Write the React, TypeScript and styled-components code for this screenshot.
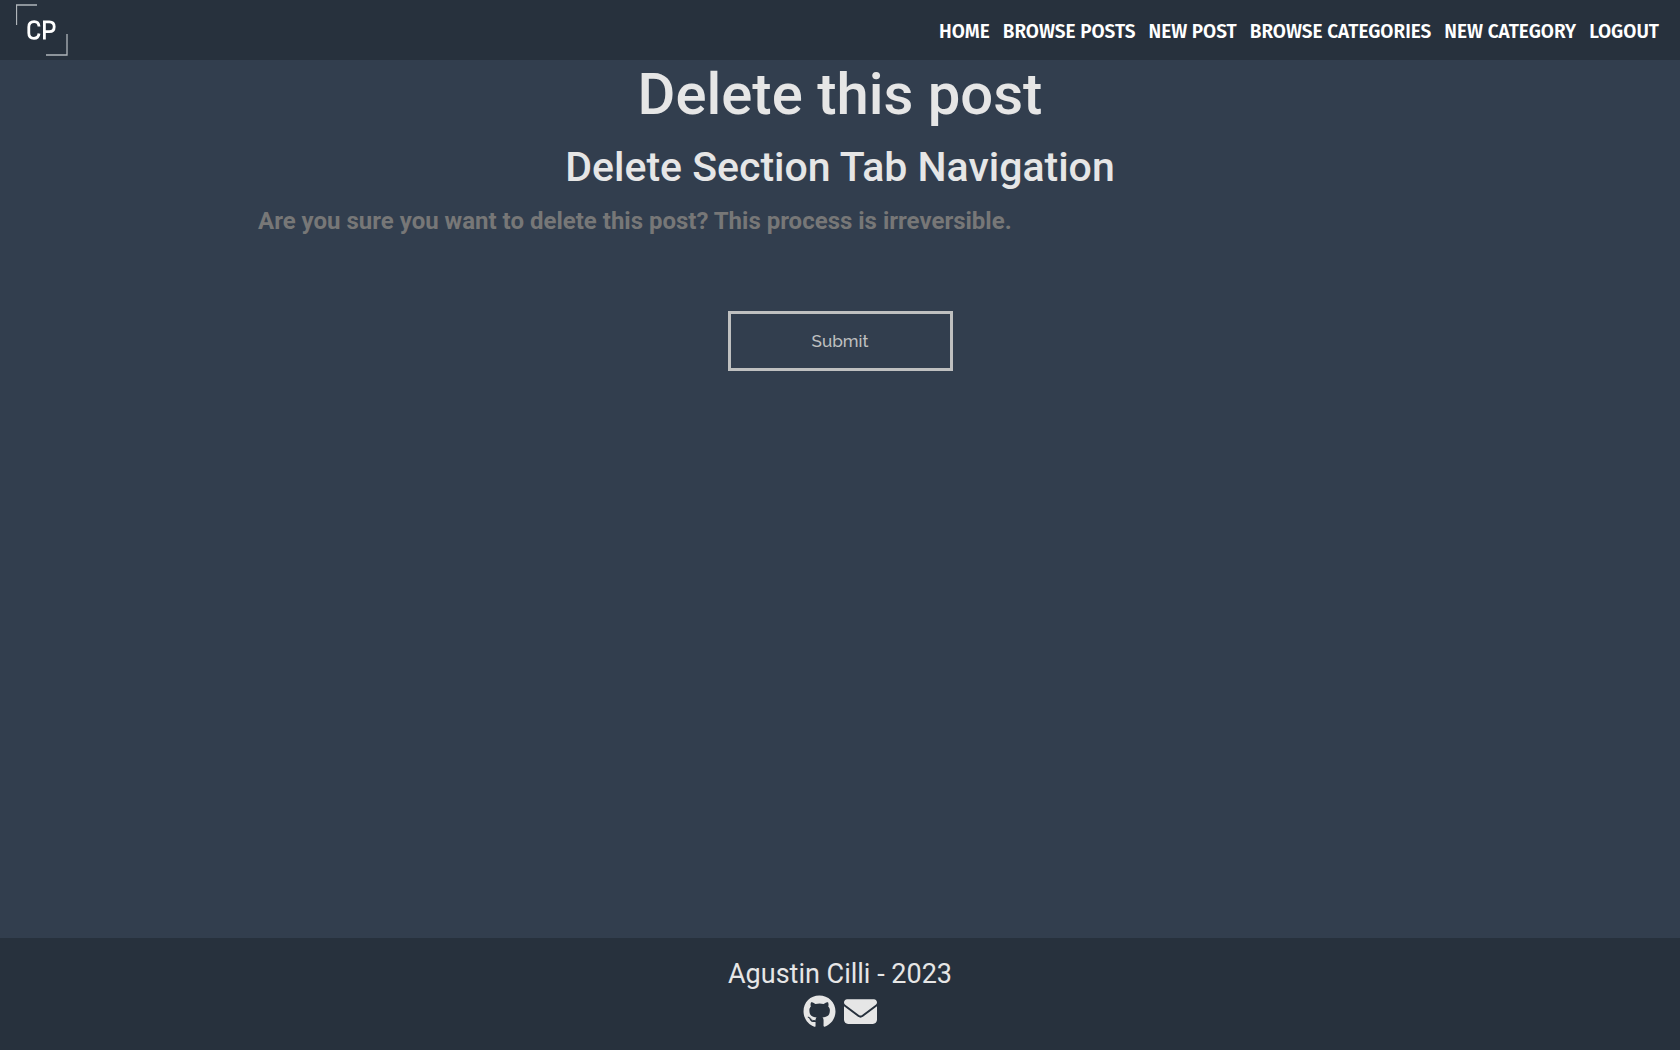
import React from "react";
import styled, { createGlobalStyle } from "styled-components";
import { FaEnvelope, FaGithub } from "react-icons/fa6";

const GlobalStyle = createGlobalStyle`
  * { box-sizing: border-box; }
  body {
    margin: 0;
    background: #323e4e;
    color: #e6e6e6;
    font-family: Roboto, sans-serif;
  }
`;

const Page = styled.div`
  display: flex;
  flex-direction: column;
  min-height: 100vh;
`;

const Header = styled.header`
  display: flex;
  align-items: center;
  justify-content: space-between;
  height: 60px;
  padding: 0 21px 0 16px;
  background: #27313d;
`;

const HomeLink = styled.a`
  display: flex;
  color: #ffffff;
`;

const Menu = styled.ul`
  display: flex;
  gap: 13px;
  margin: 0;
  padding: 4px 0 0;
  list-style: none;
`;

const MenuLink = styled.a`
  color: #ffffff;
  font-family: "Fira Sans", Roboto, sans-serif;
  font-size: 19px;
  font-weight: 600;
  line-height: 24px;
  text-decoration: none;
  text-transform: uppercase;
`;

const Main = styled.main`
  flex: 1;
`;

const Title = styled.h1`
  margin: 0;
  font-size: 58px;
  font-weight: 500;
  line-height: 68px;
  text-align: center;
`;

const Subtitle = styled.h2`
  margin: 15px 0 0;
  font-size: 41px;
  font-weight: 500;
  line-height: 48px;
  text-align: center;
`;

const Form = styled.form`
  display: flex;
  flex-direction: column;
  width: 70%;
  margin: 16px auto 0;
  padding: 0 6px;
`;

const Warning = styled.h3`
  margin: 0;
  color: #777777;
  font-size: 24px;
  font-weight: 700;
  line-height: 28px;
`;

const SubmitButton = styled.button`
  align-self: center;
  width: 225px;
  height: 60px;
  margin-top: 76px;
  padding: 0;
  border: 3px solid #bfc0c0;
  background: transparent;
  color: #bfc0c0;
  font-family: Raleway, Lato, sans-serif;
  font-size: 17px;
  font-weight: 500;
  cursor: pointer;
`;

const Footer = styled.footer`
  display: flex;
  flex-direction: column;
  align-items: center;
  height: 112px;
  padding-top: 20px;
  background: #27313d;
`;

const Author = styled.p`
  margin: 0;
  font-size: 27px;
  line-height: 32px;
`;

const Contacts = styled.div`
  display: flex;
  gap: 8px;
  margin-top: 5px;
`;

const ContactLink = styled.a`
  display: flex;
  color: inherit;
  font-size: 33px;
`;

const pages = ["Home", "Browse posts", "New post", "Browse categories", "New category", "Logout"];

function Logo() {
  return (
    <svg width="52" height="52" viewBox="0 0 52 52" fill="none" stroke="currentColor" aria-hidden="true">
      <path d="M.5 21V1H21M51 30V51H30" stroke="#b0b5ba" strokeWidth="1.300" />
      <path d="M23 22.500C22.800 19 21.300 17.700 18.200 17.700C14.500 17.700 12.800 19.800 12.800 23V29C12.800 32.300 14.500 34.300 18 34.300C21.200 34.300 22.700 32.600 23 29.500" strokeWidth="2.800" />
      <path d="M28.400 35.600V17.800H33.300C36.500 17.800 38.200 19.800 38.200 22.700S36.500 27.700 33.300 27.700H28.400" strokeWidth="2.800" />
    </svg>
  );
}

export default function App() {
  return (
    <>
      <GlobalStyle />
      <Page>
        <Header>
          <HomeLink href="#home" aria-label="CP"><Logo /></HomeLink>
          <nav>
            <Menu>
              {pages.map((page) => (
                <li key={page}>
                  <MenuLink href={`#${page.toLowerCase().replace(" ", "-")}`}>{page}</MenuLink>
                </li>
              ))}
            </Menu>
          </nav>
        </Header>
        <Main>
          <Title>Delete this post</Title>
          <Subtitle>Delete Section Tab Navigation</Subtitle>
          <Form onSubmit={(event: React.FormEvent) => event.preventDefault()}>
            <Warning>Are you sure you want to delete this post? This process is irreversible.</Warning>
            <SubmitButton type="submit">Submit</SubmitButton>
          </Form>
        </Main>
        <Footer>
          <Author>Agustin Cilli - 2023</Author>
          <Contacts>
            <ContactLink href="#github" aria-label="GitHub"><FaGithub /></ContactLink>
            <ContactLink href="#email" aria-label="Email"><FaEnvelope /></ContactLink>
          </Contacts>
        </Footer>
      </Page>
    </>
  );
}
